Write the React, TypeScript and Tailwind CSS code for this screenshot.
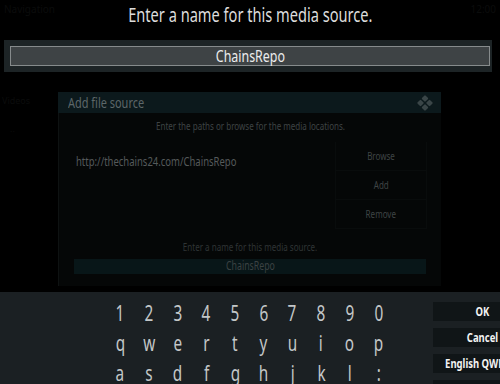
const sq = 'inline-block scale-x-[0.73] whitespace-nowrap';

const rows = [
    ['1', '2', '3', '4', '5', '6', '7', '8', '9', '0'],
    ['q', 'w', 'e', 'r', 't', 'y', 'u', 'i', 'o', 'p'],
    ['a', 's', 'd', 'f', 'g', 'h', 'j', 'k', 'l', ':'],
    ['z', 'x', 'c', 'v', 'b', 'n', 'm', '.', '@', '#'],
];

const actions = ['OK', 'Cancel', 'English QWERTY', 'Shift'];

function KodiMark() {
    return (
        <svg width="16" height="16" viewBox="0 0 16 16" className="text-[#3a4547]">
            <rect x="5.5" y="1" width="5" height="5" rx="1" transform="rotate(45 8 3.5)" fill="currentColor" />
            <rect x="1" y="5.5" width="5" height="5" rx="1" transform="rotate(45 3.5 8)" fill="currentColor" />
            <rect x="10" y="5.5" width="5" height="5" rx="1" transform="rotate(45 12.5 8)" fill="currentColor" />
            <rect x="5.5" y="10" width="5" height="5" rx="1" transform="rotate(45 8 12.5)" fill="currentColor" />
        </svg>
    );
}

export default function App() {
    return (
        <div
            className="w-[500px] h-[384px] bg-black overflow-hidden flex flex-col"
            style={{ fontFamily: '"Noto Sans", "Open Sans", sans-serif' }}
        >
            {/* heading */}
            <div className="h-[40px] grid grid-cols-[1fr_auto_1fr] items-start px-1">
                <span className="text-[10px] text-[#0b0c0c] mt-[2px]">Navigation</span>
                <span className={`${sq} scale-x-[0.68] text-[20px] leading-[30px] text-[#dcdcdc]`}>
                    Enter a name for this media source.
                </span>
                <span className="text-[10px] text-[#0b0c0c] mt-[2px] text-right">12:00</span>
            </div>

            {/* input */}
            <div className="ml-[4px] w-[488px] h-[32px] bg-[#1d2426] p-[6px] pr-[2px]">
                <div className="h-[20px] bg-[#3e4345] border border-[#868b8c] flex items-center justify-center">
                    <span className={`${sq} scale-x-[0.68] text-[17px] leading-[20px] text-[#ececec]`}>ChainsRepo</span>
                </div>
            </div>

            {/* dimmed dialog behind */}
            <div className="flex-1 flex">
                <div className="w-[58px] pt-[22px] pl-[2px] flex flex-col gap-[14px]">
                    <span className="text-[9px] text-[#0b0c0c]">Videos</span>
                    <span className="text-[9px] text-[#0b0c0c] pl-2">..</span>
                </div>
                <div className="w-[383px] mt-[20px] mb-[2px] flex flex-col">
                    <div className="h-[21px] bg-[#0c191c] flex items-center justify-between pl-[10px] pr-[8px]">
                        <span className={`${sq} origin-left text-[15px] text-[#5d6769]`}>Add file source</span>
                        <KodiMark />
                    </div>
                    <div className="flex-1 bg-[#050707] border-l border-[#0e1212] flex flex-col">
                        <div className="h-[26px] flex items-center justify-center">
                            <span className={`${sq} text-[11px] text-[#3e4344]`}>
                                Enter the paths or browse for the media locations.
                            </span>
                        </div>
                        <div className="flex">
                            <div className="flex-1 pl-[17px] pt-[9px]">
                                <span className={`${sq} origin-left text-[13px] text-[#555a5b]`}>
                                    http://thechains24.com/ChainsRepo
                                </span>
                            </div>
                            <div className="w-[92px] mr-[14px] pt-[3px] flex flex-col">
                                {['Browse', 'Add', 'Remove'].map((b) => (
                                    <div
                                        key={b}
                                        className="h-[29px] border-x border-b border-[#090c0c] flex items-center justify-center"
                                    >
                                        <span className={`${sq} text-[11px] text-[#3f4445]`}>{b}</span>
                                    </div>
                                ))}
                            </div>
                        </div>
                        <div className="mt-[10px] flex justify-center">
                            <span className={`${sq} text-[11px] text-[#2f3435]`}>
                                Enter a name for this media source.
                            </span>
                        </div>
                        <div className="mx-[15px] mt-[3px] h-[15px] bg-[#081618] flex items-center justify-center">
                            <span className={`${sq} text-[12px] text-[#3b4243]`}>ChainsRepo</span>
                        </div>
                    </div>
                </div>
            </div>

            {/* keyboard */}
            <div className="mt-[4px] h-[92px] bg-[#1b2023] flex">
                <div className="ml-[106px] pt-[6px] flex flex-col">
                    {rows.map((r, i) => (
                        <div key={i} className="flex h-[30px]">
                            {r.map((k) => (
                                <div key={k} className="w-[28.7px] flex justify-center">
                                    <span className={`${sq} text-[21px] leading-[30px] text-[#c3c7c8]`}>{k}</span>
                                </div>
                            ))}
                        </div>
                    ))}
                </div>
                <div className="ml-[40px] pt-[10px] flex flex-col gap-[7px]">
                    {actions.map((a) => (
                        <div key={a} className="w-[100px] h-[19px] shrink-0 bg-[#101517] flex items-center justify-center">
                            <span className={`${sq} text-[13px] font-bold text-[#f2f2f2]`}>{a}</span>
                        </div>
                    ))}
                </div>
            </div>
        </div>
    );
}
